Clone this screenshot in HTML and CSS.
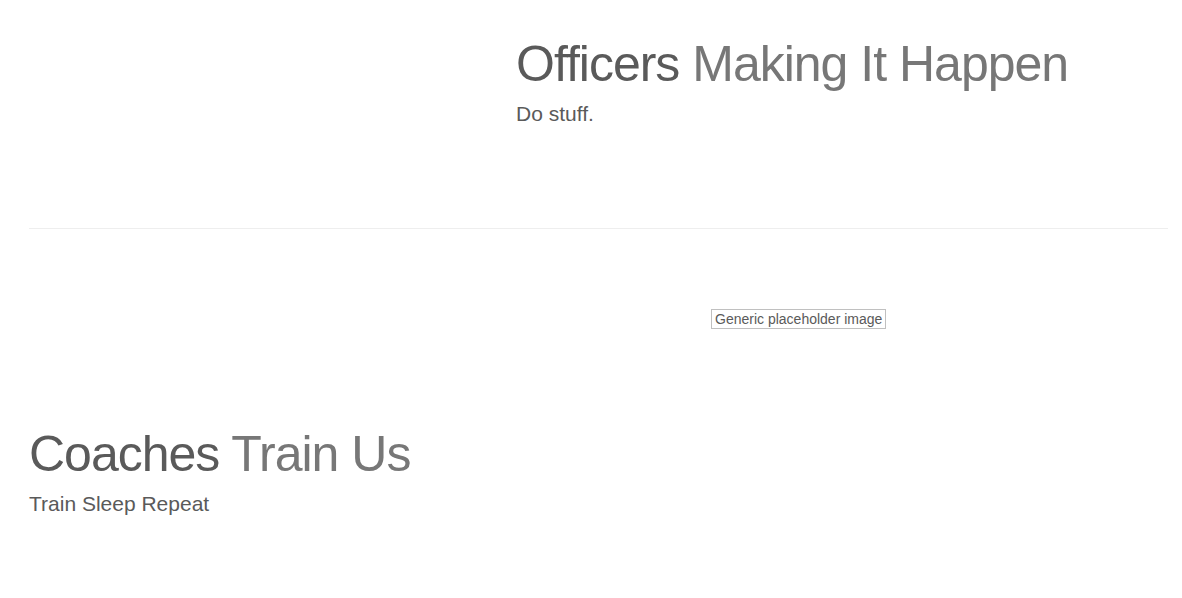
FILE: index.html
```html
<!DOCTYPE html>
<html lang="en">
<head>
    <meta charset="UTF-8">
    <meta name="viewport" content="width=device-width, initial-scale=1.0">
    <title>Team</title>
    <link rel="stylesheet" href="styles.css">
</head>
<body>
    <div class="container marketing">
        <div class="featurette featurette-top">
            <div class="featurette-media"></div>
            <div class="featurette-text">
                <h2 class="featurette-heading">Officers <span class="text-muted">Making It Happen</span></h2>
                <p class="lead">Do stuff.</p>
            </div>
        </div>

        <hr class="featurette-divider">

        <div class="featurette featurette-reverse">
            <div class="featurette-text">
                <h2 class="featurette-heading">Coaches <span class="text-muted">Train Us</span></h2>
                <p class="lead">Train Sleep Repeat</p>
            </div>
            <div class="featurette-media">
                <span class="placeholder">Generic placeholder image</span>
            </div>
        </div>
    </div>
</body>
</html>
```

FILE: styles.css
```css
body {
    margin: 0;
    background-color: #fff;
    color: #5a5a5a;
    font-family: "Liberation Sans", Arial, sans-serif;
    font-size: 14px;
    line-height: 1.42857;
}

.container {
    padding: 0 14px 40px 29px;
}

.featurette {
    display: grid;
    grid-template-columns: 457px 1fr;
    column-gap: 30px;
}

.featurette-reverse {
    grid-template-columns: 1fr 457px;
}

.featurette-heading {
    margin: 120px 0 10px;
    font-size: 50px;
    font-weight: 400;
    line-height: 1;
    letter-spacing: -1px;
    color: #5a5a5a;
}

.featurette-top .featurette-heading {
    margin-top: 39px;
}

.text-muted {
    color: #777;
}

.lead {
    margin: 0 0 20px;
    font-size: 21px;
    font-weight: 300;
    line-height: 1.4;
}

.featurette-divider {
    margin: 80px 0;
    border: 0;
    border-top: 1px solid #eee;
    height: 0;
}

.placeholder {
    display: inline-block;
    border: 1px solid #c0c0c0;
    padding: 0 3px;
    font-size: 14px;
    line-height: 18px;
    color: #5a5a5a;
}
```
